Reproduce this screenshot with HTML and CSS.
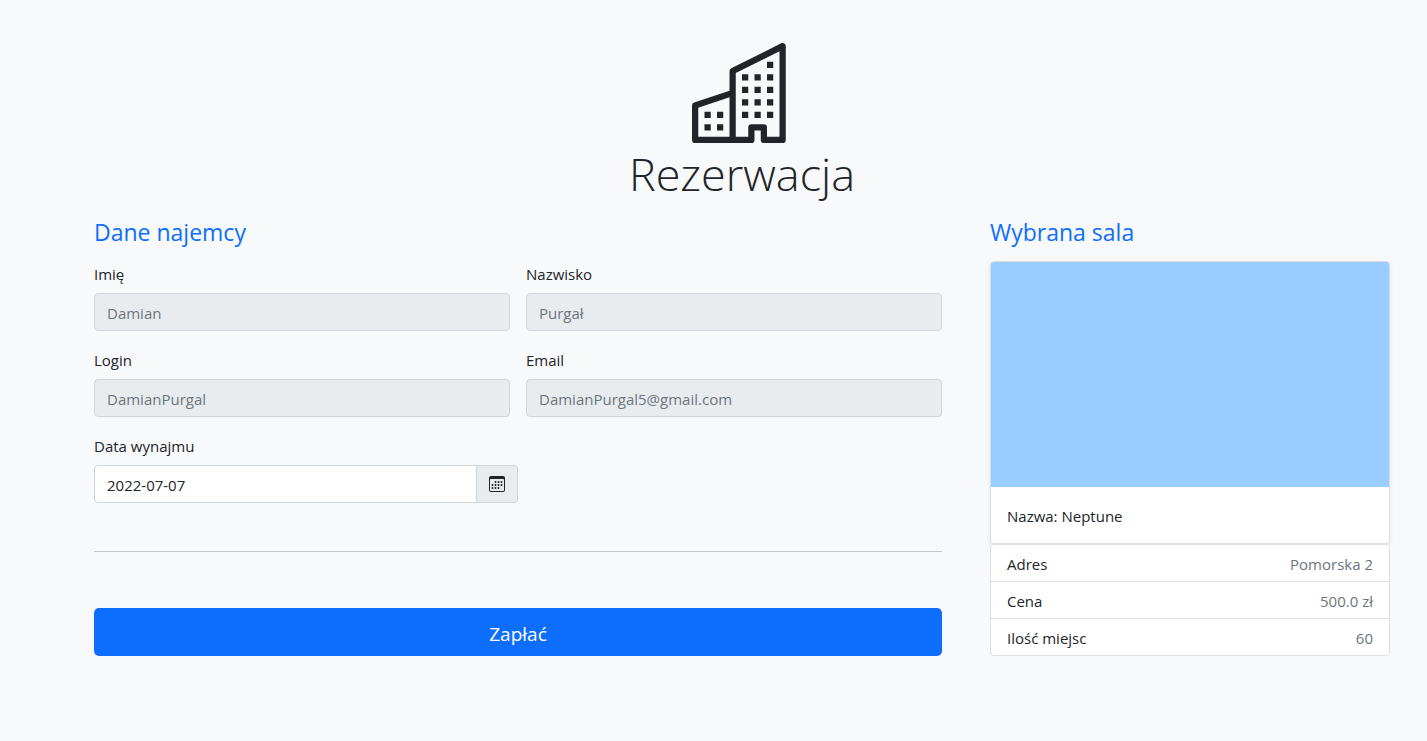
FILE: index.html
```
<!DOCTYPE html>
<html lang="pl">
<head>
<meta charset="utf-8">
<meta name="viewport" content="width=device-width, initial-scale=1">
<title>Rezerwacja</title>
<link rel="stylesheet" href="styles.css">
</head>
<body>
<main class="page">
  <header class="page-header">
    <svg class="page-logo" viewBox="0 0 16 16" fill="currentColor" aria-hidden="true">
      <path fill-rule="evenodd" d="M14.763.075A.5.5 0 0 1 15 .5v15a.5.5 0 0 1-.5.5h-3a.5.5 0 0 1-.5-.5V14h-1v1.5a.5.5 0 0 1-.5.5h-9a.5.5 0 0 1-.5-.5V10a.5.5 0 0 1 .342-.474L6 7.64V4.5a.5.5 0 0 1 .276-.447l8-4a.5.5 0 0 1 .487.022zM6 8.694 1 10.36V15h5V8.694zM7 15h2v-1.5a.5.5 0 0 1 .5-.5h2a.5.5 0 0 1 .5.5V15h2V1.309l-7 3.5V15z"/>
      <path d="M2 11h1v1H2v-1zm2 0h1v1H4v-1zm-2 2h1v1H2v-1zm2 0h1v1H4v-1zm4-4h1v1H8V9zm2 0h1v1h-1V9zm-2 2h1v1H8v-1zm2 0h1v1h-1v-1zm2-2h1v1h-1V9zm0 2h1v1h-1v-1zM8 7h1v1H8V7zm2 0h1v1h-1V7zm2 0h1v1h-1V7zM8 5h1v1H8V5zm2 0h1v1h-1V5zm2 0h1v1h-1V5zm0-2h1v1h-1V3z"/>
    </svg>
    <h1 class="page-title">Rezerwacja</h1>
  </header>

  <div class="columns">
    <section class="column column-main">
      <h2 class="section-title">Dane najemcy</h2>
      <form class="form">
        <div class="fields">
          <div class="field">
            <label class="label" for="first-name">Imię</label>
            <input class="input" id="first-name" type="text" placeholder="Damian" disabled>
          </div>
          <div class="field">
            <label class="label" for="last-name">Nazwisko</label>
            <input class="input" id="last-name" type="text" placeholder="Purgał" disabled>
          </div>
          <div class="field">
            <label class="label" for="login">Login</label>
            <input class="input" id="login" type="text" placeholder="DamianPurgal" disabled>
          </div>
          <div class="field">
            <label class="label" for="email">Email</label>
            <input class="input" id="email" type="text" placeholder="DamianPurgal5@gmail.com" disabled>
          </div>
        </div>
        <div class="field field-date">
          <label class="label" for="date">Data wynajmu</label>
          <div class="input-group">
            <input class="input" id="date" type="text" value="2022-07-07">
            <button class="input-addon" type="button" aria-label="Wybierz datę">
              <svg class="icon" viewBox="0 0 16 16" fill="currentColor" aria-hidden="true">
                <path fill-rule="evenodd" d="M14 0H2a2 2 0 0 0-2 2v12a2 2 0 0 0 2 2h12a2 2 0 0 0 2-2V2a2 2 0 0 0-2-2zM1 3.857C1 3.384 1.448 3 2 3h12c.552 0 1 .384 1 .857v10.286c0 .473-.448.857-1 .857H2c-.552 0-1-.384-1-.857V3.857z"/>
                <path d="M6.500 7a1 1 0 1 0 0-2 1 1 0 0 0 0 2zm3 0a1 1 0 1 0 0-2 1 1 0 0 0 0 2zm3 0a1 1 0 1 0 0-2 1 1 0 0 0 0 2zm-9 3a1 1 0 1 0 0-2 1 1 0 0 0 0 2zm3 0a1 1 0 1 0 0-2 1 1 0 0 0 0 2zm3 0a1 1 0 1 0 0-2 1 1 0 0 0 0 2zm3 0a1 1 0 1 0 0-2 1 1 0 0 0 0 2zm-9 3a1 1 0 1 0 0-2 1 1 0 0 0 0 2zm3 0a1 1 0 1 0 0-2 1 1 0 0 0 0 2zm3 0a1 1 0 1 0 0-2 1 1 0 0 0 0 2z"/>
              </svg>
            </button>
          </div>
        </div>
        <hr class="divider">
        <button class="button" type="submit">Zapłać</button>
      </form>
    </section>

    <aside class="column column-side">
      <h2 class="section-title">Wybrana sala</h2>
      <article class="card">
        <div class="card-image"></div>
        <p class="card-body">Nazwa: Neptune</p>
      </article>
      <dl class="details">
        <div class="detail"><dt>Adres</dt><dd>Pomorska 2</dd></div>
        <div class="detail"><dt>Cena</dt><dd>500.0 zł</dd></div>
        <div class="detail"><dt>Ilość miejsc</dt><dd>60</dd></div>
      </dl>
    </aside>
  </div>
</main>
</body>
</html>
```
FILE: styles.css
```
*, *::before, *::after {
  box-sizing: border-box;
}

body {
  margin: 0;
  background: #f8f9fb;
  color: #212529;
  font-family: "Open Sans", "Noto Sans", sans-serif;
  font-size: 15px;
  line-height: 24px;
}

.page {
  padding: 43px 37px 48px 94px;
}

.page-header {
  display: flex;
  flex-direction: column;
  align-items: center;
}

.page-logo {
  width: 100px;
  height: 100px;
}

.page-title {
  margin: 2px 0 14px;
  font-size: 45px;
  font-weight: 300;
  line-height: 58px;
}

.columns {
  display: flex;
  flex-wrap: wrap;
  margin: 0 -24px;
}

.column {
  padding: 0 24px;
}

.column-main {
  width: calc(100% * 2 / 3);
}

.column-side {
  width: calc(100% / 3);
}

.section-title {
  margin: 0 0 14px;
  color: #0d6efd;
  font-size: 23px;
  font-weight: 400;
  line-height: 30px;
}

.fields {
  display: grid;
  grid-template-columns: 1fr 1fr;
  gap: 16px;
  margin-bottom: 16px;
}

.field-date {
  width: 50%;
}

.label {
  display: block;
  margin-bottom: 6px;
  line-height: 26px;
}

.input {
  display: block;
  width: 100%;
  height: 38px;
  padding: 7px 12px 5px;
  border: 1px solid #ced4da;
  border-radius: 4px;
  background: #fff;
  color: #212529;
  font: inherit;
}

.input:disabled {
  background: #e9ecef;
}

.input::placeholder {
  color: #6c757d;
  opacity: 1;
}

.input-group {
  display: flex;
}

.input-group .input {
  flex: 1;
  min-width: 0;
  border-radius: 4px 0 0 4px;
}

.input-addon {
  display: flex;
  align-items: center;
  margin-left: -1px;
  padding: 0 12px;
  border: 1px solid #ced4da;
  border-radius: 0 4px 4px 0;
  background: #e9ecef;
  color: #212529;
}

.icon {
  width: 16px;
  height: 16px;
}

.divider {
  height: 1px;
  margin: 48px 0 56px;
  border: 0;
  background: #c3c5c8;
}

.button {
  display: block;
  width: 100%;
  height: 48px;
  padding: 3px 16px 0;
  border: 0;
  border-radius: 5px;
  background: #0d6efd;
  color: #fff;
  font: inherit;
  font-size: 19px;
}

.card {
  overflow: hidden;
  border: 1px solid #dfdfdf;
  border-radius: 4px;
  background: #fff;
  box-shadow: 0 2px 4px rgba(0, 0, 0, 0.08);
}

.card-image {
  height: 225px;
  background: #99ccff;
}

.card-body {
  margin: 0;
  padding: 17px 16px 15px;
}

.details {
  position: relative;
  margin: 0;
  border: 1px solid #dfdfdf;
  border-radius: 4px;
  background: #fff;
}

.detail {
  display: flex;
  justify-content: space-between;
  padding: 7px 16px 5px;
}

.detail + .detail {
  border-top: 1px solid #dfdfdf;
}

.detail dd {
  margin: 0;
  color: #6c757d;
}
```
